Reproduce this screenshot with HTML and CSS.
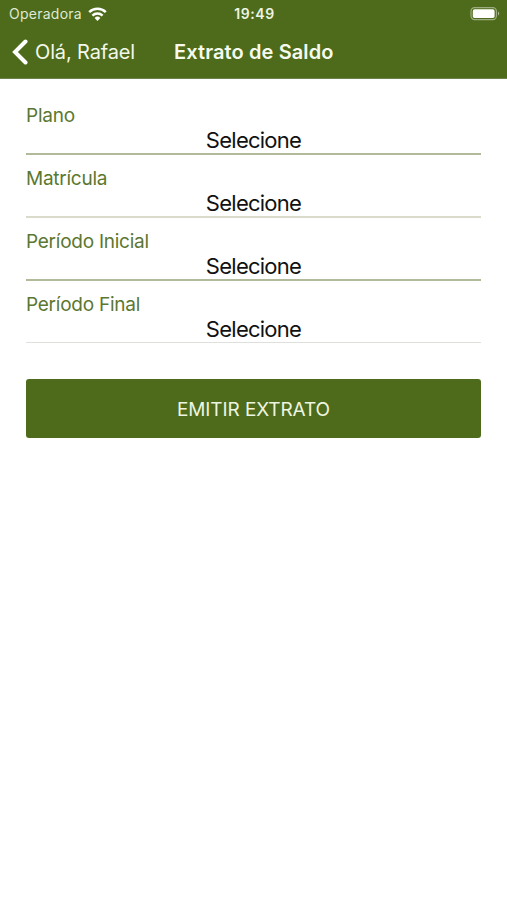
FILE: index.html
```
<!DOCTYPE html>
<html lang="pt-br">
<head>
  <meta charset="UTF-8" />
  <meta name="viewport" content="width=device-width, initial-scale=1.0"/>
  <title>Extrato de Saldo</title>
  <link rel="stylesheet" href="styles.css">
</head>
<body>
  <header class="header">
    <div class="status-bar">
      <div class="carrier">
        <span class="carrier-name">Operadora</span>
        <svg class="wifi" width="19" height="14" viewBox="0 0 19 14" fill="none" stroke="#fff" stroke-width="2.5">
          <path d="M1.2 5.2a12 12 0 0 1 16.6 0"/>
          <path d="M4.4 8.6a7.4 7.4 0 0 1 10.2 0"/>
          <path d="M9.5 14L6.6 11a4.1 4.1 0 0 1 5.8 0z" fill="#fff" stroke="none"/>
        </svg>
      </div>
      <span class="clock">19:49</span>
      <svg class="battery" width="30" height="14" viewBox="0 0 30 14">
        <rect x="1" y=".6" width="25.4" height="12" rx="3.6" fill="none" stroke="#fff" stroke-opacity=".45" stroke-width="1.2"/>
        <rect x="2.8" y="2.2" width="21.8" height="8.8" rx="1.8" fill="#fff"/>
        <path d="M28 4.6c1.7.7 1.7 3.3 0 4z" fill="#fff" fill-opacity=".5"/>
      </svg>
    </div>
    <nav class="nav-bar">
      <a class="back" href="#">
        <svg width="16" height="26" viewBox="0 0 16 26" fill="none" stroke="#fff" stroke-width="4" stroke-linecap="round">
          <path d="M13.5 2.5L3 13l10.500 10.500"/>
        </svg>
        <span class="back-text">Olá, Rafael</span>
      </a>
      <h1 class="title">Extrato de Saldo</h1>
    </nav>
  </header>

  <main class="content">
    <div class="field">
      <label class="label">Plano</label>
      <div class="select">Selecione</div>
    </div>
    <div class="field light">
      <label class="label">Matrícula</label>
      <div class="select">Selecione</div>
    </div>
    <div class="field">
      <label class="label">Período Inicial</label>
      <div class="select">Selecione</div>
    </div>
    <div class="field last">
      <label class="label">Período Final</label>
      <div class="select">Selecione</div>
    </div>
    <button class="submit-btn">EMITIR EXTRATO</button>
  </main>
</body>
</html>
```
FILE: styles.css
```
* {
  margin: 0;
  padding: 0;
  box-sizing: border-box;
  font-family: Inter, 'Liberation Sans', sans-serif;
}

body {
  background: #fff;
  min-height: 100vh;
}

.header {
  height: 79px;
  background: #4d6b1a;
  border-bottom: 1px solid #6b8449;
  color: #fff;
}

.status-bar {
  height: 27px;
  padding: 0 7px 0 9px;
  display: grid;
  grid-template-columns: 1fr auto 1fr;
  align-items: center;
}

.carrier {
  display: flex;
  align-items: center;
  gap: 6px;
}

.carrier-name {
  font-size: 14px;
  letter-spacing: 0.25px;
  color: #dfe8d2;
}

.clock {
  font-size: 14px;
  font-weight: 600;
  letter-spacing: 0.6px;
  color: #eef3e4;
}

.battery {
  justify-self: end;
}

.nav-bar {
  height: 50px;
  padding-left: 12px;
  display: flex;
  align-items: center;
}

.back {
  width: 162px;
  display: flex;
  align-items: center;
  gap: 7px;
  color: #f3f8ea;
  text-decoration: none;
}

.back-text {
  font-size: 20px;
  letter-spacing: -0.15px;
  white-space: nowrap;
}

.title {
  font-size: 20px;
  font-weight: 600;
  letter-spacing: 0.1px;
  color: #f6faee;
}

.content {
  padding: 24px 26px;
}

.field {
  height: 63px;
}

.label {
  display: block;
  height: 24px;
  font-size: 19px;
  line-height: 25px;
  letter-spacing: -0.25px;
  color: #5b7730;
}

.select {
  height: 28px;
  border-bottom: 2px solid #b2ba9c;
  font-size: 22px;
  line-height: 26px;
  letter-spacing: -0.75px;
  text-align: center;
  color: #111;
}

.light .select {
  border-color: #dadbcb;
}

.last .select {
  height: 27px;
  border-bottom: 1px solid #dfdfdb;
}

.submit-btn {
  display: block;
  width: 100%;
  height: 59px;
  margin-top: 24px;
  padding-top: 1px;
  background: #4d6b1a;
  border: none;
  border-radius: 3px;
  font-size: 19px;
  letter-spacing: -0.1px;
  color: #edf5e0;
}
```
